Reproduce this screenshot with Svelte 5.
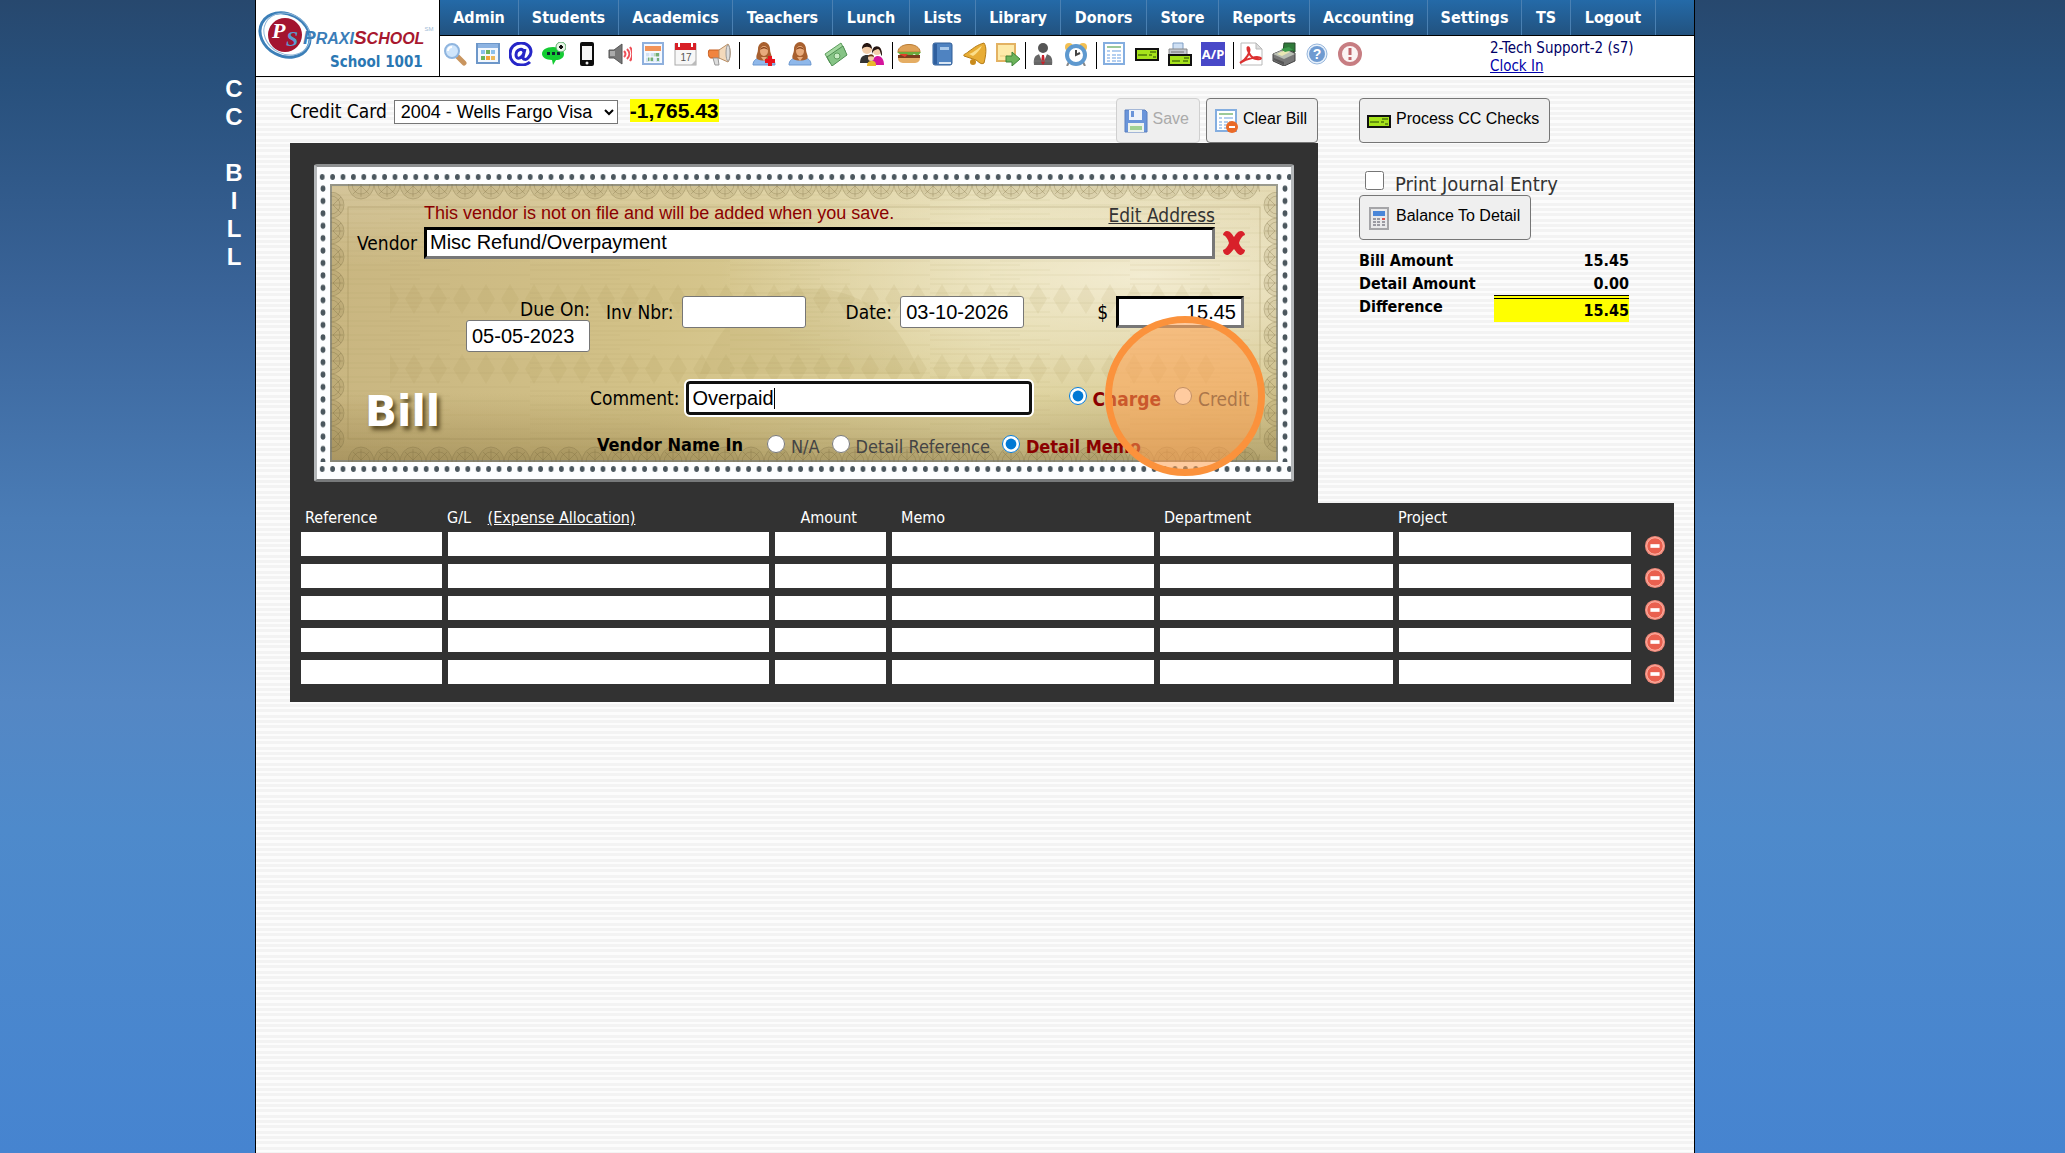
<script>
    const menu = [
        { label: "Admin", width: 79 },
        { label: "Students", width: 100 },
        { label: "Academics", width: 114 },
        { label: "Teachers", width: 100 },
        { label: "Lunch", width: 77 },
        { label: "Lists", width: 66 },
        { label: "Library", width: 85 },
        { label: "Donors", width: 86 },
        { label: "Store", width: 72 },
        { label: "Reports", width: 91 },
        { label: "Accounting", width: 118 },
        { label: "Settings", width: 94 },
        { label: "TS", width: 49 },
        { label: "Logout", width: 85 },
    ];

    const tools = [
        ["search", "schedule", "email", "chat", "phone", "speaker", "calendar", "date", "announce"],
        ["addPerson", "person", "money", "family"],
        ["burger", "book", "bell", "note"],
        ["staff", "clock"],
        ["ledger", "check", "printCheck", "payable"],
        ["pdf", "register", "help", "alert"],
    ];

    const person = `<path d="M1 23c0-5 4-7 7-7h8c4 0 7 2 7 7z" fill="#8fb8ea" stroke="#6b97cf"/>
        <path d="M5 17C3 14 6 12 6 7c0-4 3-7 6-7s6 3 6 7c0 5 3 7 1 10-4 2-10 2-14 0z" fill="#a8602f"/>
        <ellipse cx="12" cy="9" rx="4" ry="5" fill="#e8ab7c"/><path d="M8 8c1-4 7-4 8 0-3-2-5-2-8 0z" fill="#8a451c"/><path d="M9 15l3 4 3-4z" fill="#e8ab7c"/>`;

    const sheet = `<rect x="2" y="1" width="20" height="21" fill="#fff" stroke="#84aee0" stroke-width="2"/>
        <rect x="5" y="4" width="14" height="2" fill="#9cc99a"/>
        <path d="M5 8h3v2H5zM10 8h9v2h-9zM5 12h3v2H5zM10 12h4v2h-4zM15 12h4v2h-4zM5 15h3v2H5zM10 15h4v2h-4zM15 15h4v2h-4zM5 18h3v2H5zM10 18h4v2h-4zM15 18h4v2h-4z" fill="#b4cff0"/>`;

    const icons = {
        search: `<path d="M14 14l7 7" stroke="#c9955f" stroke-width="5" stroke-linecap="round"/><circle cx="9" cy="9" r="7" fill="#cfe5fb" stroke="#8fb5df" stroke-width="2"/><path d="M5 9c0-3 2-4 4-4" stroke="#fff" stroke-width="2" fill="none"/>`,
        schedule: `<rect x="1" y="2" width="22" height="19" fill="#f3f8fe" stroke="#6d97c9" stroke-width="2"/><rect x="2" y="2" width="20" height="4" fill="#8cb3e2"/><path d="M5 8h4v4H5zM15 8h4v4h-4z" fill="#8cc0ec"/><path d="M10 8h4v4h-4zM5 14h4v4H5z" fill="#6bb35c"/><path d="M10 14h4v4h-4z" fill="#f2a33a"/><path d="M15 14h4v4h-4z" fill="#ecb95c"/>`,
        email: `<path d="M16 7l-2 8c0 3 3 3 5 1 2-2 3-4 3-6 0-5-4-9-10-9C5 1 1 6 1 12s4 11 11 11c4 0 7-1 9-3M15 11c0-6-8-4-8 2 0 5 6 4 8-2z" fill="none" stroke="#2626c8" stroke-width="3"/>`,
        chat: `<path d="M11 5c7 0 11 3 11 7s-4 6-8 6l-3 5-1-5c-6 0-10-3-10-6 0-4 4-7 11-7z" fill="#14cc33"/><path d="M5 10h3v3H5zM10 10h3v3h-3zM15 10h3v3h-3z" fill="#123"/><circle cx="19" cy="5" r="5" fill="#e6f5e6" stroke="#5a6"/><path d="M17 5h4M19 3v4" stroke="#111" stroke-width="2"/>`,
        phone: `<rect x="5" y="0" width="14" height="24" rx="2" fill="#0d0d0d"/><rect x="7" y="4" width="10" height="14" fill="#f4f4f4"/><circle cx="12" cy="21" r="1.500" fill="#eee"/>`,
        speaker: `<path d="M1 8h5l8-6v20l-8-6H1z" fill="#777" stroke="#555"/><path d="M2 9h5v5H2z" fill="#aaa"/><path d="M16 9c2 2 2 4 0 6M19 7c3 3 3 7 0 10M22 5c3 4 3 10 0 14" fill="none" stroke="#ee4f57" stroke-width="2"/>`,
        calendar: `<rect x="2" y="1" width="20" height="21" fill="#f5f9ff" stroke="#8fb0dd" stroke-width="2"/><rect x="4" y="4" width="16" height="5" fill="#f29358"/><path d="M5 11h14v9H5z" fill="#d3e2f4"/><path d="M13 11h5v4h-5zM7 15h5v4H7zM16 16h2v3h-2z" fill="#74ae76"/><path d="M9 11v9M14 11v9M5 15h14" stroke="#fff"/>`,
        date: `<rect x="1" y="2" width="21" height="21" fill="#f7f7f7" stroke="#aaa"/><path d="M1 1h21v7H1z" fill="#d81f26"/><path d="M5 0v5M18 0v5" stroke="#fff" stroke-width="2"/><text x="12" y="19" text-anchor="middle" font-family="Liberation Sans, sans-serif" font-size="10" fill="#555">17</text><path d="M17 23l5-5v5z" fill="#bbb"/>`,
        announce: `<path d="M2 8h11v8H4c-3 0-3-6-2-8z" fill="#f0843f" stroke="#c65c1c"/><path d="M12 8l9-6c3 4 3 14 0 18l-9-4z" fill="#f3d9bb" stroke="#b78d63"/><ellipse cx="21" cy="11" rx="2" ry="8" fill="#ddd" stroke="#999"/><path d="M6 16h5l1 7H8z" fill="#ddd" stroke="#999"/>`,
        addPerson: person + `<path d="M18 14v10M13 19h10" stroke="#e8141c" stroke-width="4"/>`,
        person: person,
        money: `<path d="M1 12L17 1l4 8L6 21z" fill="#a4d7a0" stroke="#5d9d5d"/><path d="M3 15L19 4l4 9L8 24z" fill="#86c486" stroke="#4f8f52"/><circle cx="13" cy="14" r="3" fill="#c6e9c2" stroke="#5d9d5d"/>`,
        family: `<path d="M0 21c0-6 3-8 7-8s6 2 6 8z" fill="#333"/><circle cx="7" cy="7" r="5" fill="#f3cda9"/><path d="M2 7c0-8 10-8 10 0-3-3-7-3-10 0z" fill="#261611"/><path d="M12 23c0-7 3-9 6-9s6 3 6 9z" fill="#d5149c"/><circle cx="17" cy="9" r="4" fill="#f3cda9"/><path d="M12 12c-1-10 11-11 10 2-2-2-1-6-4-7-3 1-5 1-6 5z" fill="#261611"/><path d="M7 24c0-4 2-5 5-5s4 1 4 5z" fill="#e8b92d"/><circle cx="11" cy="16" r="3" fill="#f3cda9"/><path d="M8 15c1-4 6-3 6 0-2-1-4-1-6 0z" fill="#6d3a14"/>`,
        burger: `<path d="M1 10c0-10 22-10 22 0z" fill="#dfa257" stroke="#b97c34"/><path d="M0 10h24l-3 4-4-2-4 3-4-3-4 2z" fill="#6cab3c"/><path d="M1 13h22v3H1z" fill="#7b3e1e"/><path d="M2 12l6 3 3-3z" fill="#e23d2c"/><path d="M1 16h22c0 4-3 5-6 5H7c-3 0-6-1-6-5z" fill="#e5ad63"/>`,
        book: `<rect x="3" y="1" width="19" height="22" rx="2" fill="#4f83c1" stroke="#2f5c96"/><path d="M4 2h3v20H4z" fill="#2f5f9e"/><path d="M9 20h12v2H9z" fill="#d9e6f4"/><rect x="10" y="5" width="9" height="3" fill="#a9c9ea"/>`,
        bell: `<path d="M21 1c3 4 2 12 0 20-3 2-5-1-8-3L1 14c-1-2 2-2 4-4C12 5 14 3 21 1z" fill="#e8ad35" stroke="#b47b15"/><path d="M6 12c6-2 9-6 13-8-2 4-6 8-9 10z" fill="#fbdf8b"/><circle cx="10" cy="20" r="3" fill="#c98b1c"/>`,
        note: `<path d="M1 2h18v17H1z" fill="#fdeaa9" stroke="#e3b262" stroke-width="2"/><path d="M4 14h8" stroke="#e9ca80"/><path d="M10 14h6v-4l8 7-8 7v-4h-6z" fill="#6cb35a" stroke="#3c8237"/>`,
        staff: `<path d="M3 23c-1-7 1-10 6-11h6c5 1 7 4 6 11z" fill="#666"/><circle cx="12" cy="6" r="5" fill="#555"/><path d="M8 12l4 10 4-10z" fill="#fff"/><path d="M11 13h2l1 7-2 3-2-3z" fill="#c8202a"/><path d="M3 19h18" stroke="#777"/>`,
        clock: `<circle cx="5" cy="5" r="4" fill="#f2bf52"/><circle cx="19" cy="5" r="4" fill="#f2bf52"/><path d="M5 20l-2 4M19 20l2 4" stroke="#888" stroke-width="2"/><circle cx="12" cy="13" r="9" fill="#fff" stroke="#5e99cf" stroke-width="4"/><path d="M12 8v5l4-2" fill="none" stroke="#444" stroke-width="2"/>`,
        ledger: sheet,
        check: `<rect x="1" y="7" width="22" height="11" fill="#a6e31b" stroke="#111" stroke-width="2"/><path d="M3 13h9M15 10h6M14 13h3M18 15h3" stroke="#234400" stroke-width="1"/>`,
        printCheck: `<path d="M5 1h10v8H5z" fill="#cfe0f4" stroke="#7e9ec4"/><path d="M1 7h18v8H1z" fill="#c3c8cf" stroke="#888"/><path d="M3 10h13" stroke="#777"/><rect x="1" y="13" width="22" height="10" fill="#a6e31b" stroke="#111" stroke-width="2"/><path d="M4 19h8M16 16h5M15 19h5" stroke="#234400"/>`,
        payable: `<rect width="24" height="24" fill="#4848c8"/><text x="12" y="17" text-anchor="middle" font-family="Noto Sans, sans-serif" font-size="13" font-weight="bold" fill="#fff">A/P</text>`,
        pdf: `<path d="M2 1h15l6 6v16H2z" fill="#fff" stroke="#b9b9b9"/><path d="M17 1v6h6z" fill="#ddd" stroke="#b9b9b9"/><path d="M1 21c6-3 11-11 9-15-1-2-3 0 0 5 2 4 6 7 11 6 3-1-2-3-8-1-5 1-9 3-12 5z" fill="none" stroke="#dc3030" stroke-width="2"/>`,
        register: `<path d="M1 12l12-5 10 4v8l-11 5-11-5z" fill="#777" stroke="#444"/><path d="M1 12l11 5 11-5-10-5z" fill="#b9beb4"/><path d="M12 1h11v9l-6-2-6 2z" fill="#2f7a3a" stroke="#294b2c"/><path d="M5 12l8-4 5 2-8 4z" fill="#e8e6b4"/><path d="M9 7l8-2 4 3-8 2z" fill="#3c9a4b"/><path d="M2 16l10 4v3L2 18z" fill="#555"/>`,
        help: `<circle cx="12" cy="12" r="10" fill="#e8f1fb" stroke="#96b6dc"/><circle cx="12" cy="12" r="8" fill="#6f9bd1"/><text x="12" y="17" text-anchor="middle" font-family="Liberation Sans, sans-serif" font-size="14" font-weight="bold" fill="#fff">?</text>`,
        alert: `<circle cx="12" cy="12" r="10" fill="#fbf3f3" stroke="#c77d82" stroke-width="4"/><path d="M12 6v7M12 15v3" stroke="#c0666c" stroke-width="3"/>`,
        save: `<path d="M1 1h20l2 2v20H1z" fill="#4a7fd6" stroke="#3564b5"/><path d="M5 1h13v10H5z" fill="#eef4fd"/><path d="M7 2h3v6H7z" fill="#4a7fd6"/><path d="M4 14h16v9H4z" fill="#eef4ee"/><path d="M6 17h12v4H6z" fill="#8dca7d"/>`,
        clear: sheet + `<circle cx="18" cy="18" r="6" fill="#ea6a28"/><path d="M15 18h6" stroke="#fff" stroke-width="2"/>`,
        calculator: `<rect x="3" y="2" width="18" height="21" fill="#e9e9ea" stroke="#a5a5a8" stroke-width="2"/><rect x="6" y="5" width="12" height="5" fill="#4a86d8"/><path d="M6 12h3v2H6zM10 12h3v2h-3zM6 15h3v2H6zM10 15h3v2h-3zM6 18h3v2H6zM10 18h3v2h-3zM15 15h3v2h-3zM15 18h3v2h-3z" fill="#9a9aa2"/><path d="M15 12h3v2h-3z" fill="#e0524c"/>`,
        remove: `<path d="M5 0c3 0 5 3 7 6 2-3 4-6 7-6 2 0 4 2 4 4-3 1-5 4-6 8 1 3 3 6 6 7 0 3-3 5-5 5-3-1-4-4-6-6-2 2-4 5-6 6-3 0-5-2-5-5 3-1 5-4 6-7-1-4-3-7-6-8 0-2 2-4 4-4z" fill="#d8202a"/>`,
        minus: `<circle cx="12" cy="12" r="11" fill="#f08a7b"/><circle cx="12" cy="12" r="9" fill="#e9604f" stroke="#ffb9ac"/><path d="M7 12h10" stroke="#fff" stroke-width="4"/>`,
    };

    const columns = ["reference", "G/L account", "amount", "memo", "department", "project"];

    let card = $state("2004 - Wells Fargo Visa");
    let vendor = $state("Misc Refund/Overpayment");
    let dueOn = $state("05-05-2023");
    let invoice = $state("");
    let date = $state("03-10-2026");
    let amount = $state("15.45");
    let comment = $state("Overpaid");
    let kind = $state("charge");
    let nameIn = $state("memo");
    let rows = $state([1, 2, 3, 4, 5]);
</script>

{#snippet icon(name)}
    <svg class="icon" viewBox="0 0 24 24" aria-hidden="true">{@html icons[name]}</svg>
{/snippet}

<div class="screen">
    <aside>
        <h1><span>C</span><span>C</span><span></span><span>B</span><span>I</span><span>L</span><span>L</span></h1>
    </aside>

    <div class="page">
        <header>
            <a class="brand" href="#home">
                <svg class="swoosh" viewBox="0 0 50 56" aria-hidden="true">
                    <ellipse cx="25" cy="27" rx="26" ry="21" transform="rotate(28 25 27)" fill="none" stroke="#3c7fb8" stroke-width="3" />
                    <ellipse cx="27" cy="26" rx="24" ry="20" transform="rotate(28 27 26)" fill="none" stroke="#8fb6d8" stroke-width="1" />
                    <circle cx="25" cy="27" r="17" fill="#a3142f" />
                    <text x="12" y="30" font-family="Liberation Serif, serif" font-size="22" font-weight="bold" font-style="italic" fill="#fff">P</text>
                    <text x="26" y="38" font-family="Liberation Serif, serif" font-size="22" font-weight="bold" font-style="italic" fill="#5b9bd0">S</text>
                </svg>
                <span class="names">
                    <span class="wordmark"><b>P</b>RAXI<i><b>S</b>CHOOL</i><small>SM</small></span>
                    <span class="school">School 1001</span>
                </span>
            </a>
            <div class="bars">
                <nav>
                    {#each menu as item}
                        <a href="#{item.label}" style="width: {item.width}px">{item.label}</a>
                    {/each}
                </nav>
                <div class="toolbar">
                    {#each tools as group}
                        <div class="group">
                            {#each group as tool}
                                <a href="#{tool}" aria-label={tool}>{@render icon(tool)}</a>
                            {/each}
                        </div>
                    {/each}
                    <div class="user">
                        <div>2-Tech Support-2 (s7)</div>
                        <a href="#clock-in">Clock In</a>
                    </div>
                </div>
            </div>
        </header>

        <main>
            <div class="top">
                <section class="bill">
                    <div class="account">
                        <label for="card">Credit Card</label>
                        <select id="card" bind:value={card}>
                            <option>2004 - Wells Fargo Visa</option>
                        </select>
                        <strong class="balance">-1,765.43</strong>
                        <div class="actions">
                            <button disabled>{@render icon("save")}Save</button>
                            <button>{@render icon("clear")}Clear Bill</button>
                        </div>
                    </div>

                    <div class="panel">
                        <div class="cheque">
                            <svg class="paper" aria-hidden="true">
                                <defs>
                                    <linearGradient id="gold" x1="0" y1="0" x2="1" y2="0">
                                        <stop offset="0" stop-color="#c9b681" />
                                        <stop offset=".35" stop-color="#d3c288" />
                                        <stop offset=".7" stop-color="#e0d5a2" />
                                        <stop offset="1" stop-color="#d8ca94" />
                                    </linearGradient>
                                    <radialGradient id="glow" cx=".86" cy=".33" r=".45">
                                        <stop offset="0" stop-color="#fffbee" stop-opacity=".65" />
                                        <stop offset="1" stop-color="#fffbee" stop-opacity="0" />
                                    </radialGradient>
                                    <linearGradient id="shade" x1="0" y1="0" x2="0" y2="1">
                                        <stop offset="0" stop-color="#fff" stop-opacity=".2" />
                                        <stop offset=".3" stop-color="#fff" stop-opacity="0" />
                                        <stop offset=".75" stop-color="#7a6226" stop-opacity="0" />
                                        <stop offset="1" stop-color="#6e5824" stop-opacity=".35" />
                                    </linearGradient>
                                    <pattern id="dotsX" width="10.400" height="12" patternUnits="userSpaceOnUse" x="3" y="7">
                                        <ellipse cx="5.200" cy="6" rx="2.400" ry="3" fill="#4b575e" />
                                    </pattern>
                                    <pattern id="dotsY" width="12" height="12.400" patternUnits="userSpaceOnUse" x="3" y="6">
                                        <ellipse cx="6" cy="6.200" rx="2.400" ry="3" fill="#4b575e" />
                                    </pattern>
                                    <pattern id="dotsRight" width="12" height="12.400" patternUnits="userSpaceOnUse" x="0" y="6">
                                        <ellipse cx="6" cy="6.200" rx="2.400" ry="3" fill="#4b575e" />
                                    </pattern>
                                    <pattern id="fan" width="26" height="18" patternUnits="userSpaceOnUse" x="8" y="20">
                                        <path d="M0 0a13 15 0 0 0 26 0M4 0a9 10 0 0 0 18 0M13 0v13M13 2l-8 8M13 2l8 8" fill="none" stroke="#6d5f35" stroke-opacity=".28" />
                                        <path d="M0 0a13 15 0 0 0 26 0z" fill="#7a6a3a" fill-opacity=".13" />
                                    </pattern>
                                    <pattern id="fanSide" width="14" height="26" patternUnits="userSpaceOnUse">
                                        <path d="M0 0a13 13 0 0 1 0 26M0 4a9 9 0 0 1 0 18M0 13h12M2 13l8-8M2 13l8 8" fill="none" stroke="#6d5f35" stroke-opacity=".28" />
                                        <path d="M0 0a13 13 0 0 1 0 26z" fill="#7a6a3a" fill-opacity=".13" />
                                    </pattern>
                                    <pattern id="diamonds" width="24" height="70" patternUnits="userSpaceOnUse">
                                        <path d="M12 30l9 15-9 15-9-15z" fill="#a08a48" fill-opacity=".1" />
                                    </pattern>
                                    <pattern id="grain" width="200" height="14" patternUnits="userSpaceOnUse">
                                        <path d="M0 2h120M60 7h140M0 11h90" stroke="#a08a4a" stroke-opacity=".12" />
                                    </pattern>
                                </defs>
                                <svg x="16" y="20" width="948" height="278">
                                    <rect width="100%" height="100%" fill="url(#gold)" />
                                    <rect width="100%" height="100%" fill="url(#glow)" />
                                    <rect width="100%" height="100%" fill="url(#shade)" />
                                    <rect width="100%" height="100%" fill="url(#grain)" />
                                    <rect x="60" y="90" width="830" height="120" fill="url(#diamonds)" />
                                    <path d="M370 190c20-50 50-85 110-85s90 35 110 85" fill="#a08a48" fill-opacity=".1" />
                                    <rect x="18" y="23" width="912" height="232" fill="none" stroke="#8f7f4a" stroke-opacity=".35" />
                                    <rect width="948" height="278" fill="none" stroke="#7b8080" stroke-opacity=".7" stroke-width="4" />
                                </svg>
                                <rect x="34" y="20" width="912" height="18" fill="url(#fan)" />
                                <g transform="translate(0 318) scale(1 -1)"><rect x="34" y="20" width="912" height="18" fill="url(#fan)" /></g>
                                <g transform="translate(17 28)"><rect width="14" height="260" fill="url(#fanSide)" /></g>
                                <g transform="translate(963 28) scale(-1 1)"><rect width="14" height="260" fill="url(#fanSide)" /></g>
                                <rect x="3" y="7" width="974" height="12" fill="url(#dotsX)" />
                                <g transform="translate(0 292)"><rect x="3" y="7" width="974" height="12" fill="url(#dotsX)" /></g>
                                <rect x="3" y="18" width="12" height="280" fill="url(#dotsY)" />
                                <g transform="translate(965 0)"><rect y="18" width="12" height="280" fill="url(#dotsRight)" /></g>
                            </svg>

                            <div class="form">
                                <div class="vendor">
                                    <div class="notes">
                                        <span class="warning">This vendor is not on file and will be added when you save.</span>
                                        <a href="#address">Edit Address</a>
                                    </div>
                                    <label for="vendor">Vendor</label>
                                    <input id="vendor" class="inset" bind:value={vendor} />
                                    <button class="plain" aria-label="Clear vendor" onclick={() => (vendor = "")}>{@render icon("remove")}</button>
                                </div>

                                <div class="dates">
                                    <div class="due">
                                        <label for="due">Due On:</label>
                                        <input id="due" bind:value={dueOn} />
                                    </div>
                                    <div class="field">
                                        <label for="invoice">Inv Nbr:</label>
                                        <input id="invoice" bind:value={invoice} />
                                    </div>
                                    <div class="field date">
                                        <label for="date">Date:</label>
                                        <input id="date" bind:value={date} />
                                    </div>
                                    <div class="field amount">
                                        <label for="amount">$</label>
                                        <input id="amount" class="inset" bind:value={amount} />
                                    </div>
                                </div>

                                <div class="lower">
                                    <div class="stamp">Bill</div>
                                    <div class="details">
                                        <div class="comment">
                                            <label for="comment">Comment:</label>
                                            <div class="entry">
                                                <input id="comment" bind:value={comment} />
                                                <span class="caret"></span>
                                            </div>
                                            <label class="option"><input type="radio" value="charge" bind:group={kind} /><span>Charge</span></label>
                                            <label class="option"><input type="radio" value="credit" bind:group={kind} /><span>Credit</span></label>
                                        </div>
                                        <div class="name-in">
                                            <strong>Vendor Name In</strong>
                                            <label class="option"><input type="radio" value="none" bind:group={nameIn} /><span>N/A</span></label>
                                            <label class="option"><input type="radio" value="reference" bind:group={nameIn} /><span>Detail Reference</span></label>
                                            <label class="option"><input type="radio" value="memo" bind:group={nameIn} /><span>Detail Memo</span></label>
                                        </div>
                                    </div>
                                </div>
                            </div>
                            <div class="pointer"></div>
                        </div>
                    </div>
                </section>

                <section class="side">
                    <button>{@render icon("check")}Process CC Checks</button>
                    <label class="journal"><input type="checkbox" /><span>Print Journal Entry</span></label>
                    <button>{@render icon("calculator")}Balance To Detail</button>
                    <dl>
                        <dt>Bill Amount</dt>
                        <dd>15.45</dd>
                        <dt>Detail Amount</dt>
                        <dd>0.00</dd>
                        <dt>Difference</dt>
                        <dd class="difference">15.45</dd>
                    </dl>
                </section>
            </div>

            <div class="lines">
                <table>
                    <thead>
                        <tr>
                            <th class="reference">Reference</th>
                            <th class="gl">G/L <a href="#allocation">(Expense Allocation)</a></th>
                            <th class="sum">Amount</th>
                            <th class="memo">Memo</th>
                            <th class="department">Department</th>
                            <th class="project">Project</th>
                            <th class="delete"></th>
                        </tr>
                    </thead>
                    <tbody>
                        {#each rows as row (row)}
                            <tr>
                                {#each columns as column}
                                    <td><input aria-label="Line {row} {column}" /></td>
                                {/each}
                                <td class="delete">
                                    <button class="plain" aria-label="Remove line {row}" onclick={() => (rows = rows.filter((r) => r !== row))}>{@render icon("minus")}</button>
                                </td>
                            </tr>
                        {/each}
                    </tbody>
                </table>
            </div>
        </main>
    </div>
</div>

<style>
    :global(body) {
        margin: 0;
    }

    .screen {
        display: grid;
        grid-template-columns: 255px minmax(0, 1440px) auto;
        min-height: 100vh;
        background: linear-gradient(#27486e, #28507c 7%, #3a6499 26%, #4a7cb6 45%, #5487c4 61%, #4e8acb 72%, #4684d0);
        font-family: "DejaVu Sans Condensed", "Noto Sans", sans-serif;
        font-size: 19px;
        color: #000;
    }

    .screen * {
        box-sizing: border-box;
    }

    .icon {
        display: block;
        width: 24px;
        height: 24px;
    }

    aside {
        display: flex;
        justify-content: flex-end;
        padding: 75px 12px 0 0;
    }

    h1 {
        display: flex;
        flex-direction: column;
        width: 18px;
        margin: 0;
        font: bold 24px/28px "Liberation Sans", sans-serif;
        color: #fff;
        text-align: center;
    }

    h1 span {
        height: 28px;
    }

    .page {
        border: solid #000;
        border-width: 0 1px;
        background: linear-gradient(#f3f3f3 0 3px, #fcfcfc 3px 5px, #f3f3f3 5px 8px, #fcfcfc 8px 11px, #f3f3f3 11px 14px, #fcfcfc 14px) 0 0 / 100% 16px;
    }

    header {
        display: flex;
        height: 77px;
        border-bottom: 1px solid #000;
        background: #fff;
    }

    .brand {
        display: flex;
        width: 184px;
        padding: 8px 0 0 4px;
        border-right: 1px solid #000;
        text-decoration: none;
    }

    .swoosh {
        flex: none;
        width: 50px;
        height: 56px;
        overflow: visible;
    }

    .names {
        display: flex;
        flex-direction: column;
        margin-left: -7px;
        padding-top: 18px;
    }

    .wordmark {
        height: 27px;
        font: italic bold 16px/24px "Liberation Sans", sans-serif;
        color: #3a7db8;
        white-space: nowrap;
    }

    .wordmark b {
        font-size: 19px;
    }

    .wordmark i {
        color: #a8182f;
    }

    .wordmark small {
        font: 6px "Liberation Sans", sans-serif;
        vertical-align: top;
        color: #9dbbd6;
    }

    .school {
        padding-left: 27px;
        font-size: 15px;
        line-height: 18px;
        font-weight: bold;
        color: #2a77b3;
    }

    .bars {
        flex: 1;
        min-width: 0;
    }

    nav {
        display: flex;
        height: 36px;
        border-bottom: 1px solid #000;
        background: linear-gradient(#246aa8, #22527f);
    }

    nav a {
        border-right: 1px solid #4a80b2;
        font-size: 16px;
        line-height: 35px;
        font-weight: bold;
        color: #fff;
        text-align: center;
        text-decoration: none;
    }

    .toolbar {
        display: flex;
        height: 40px;
        padding: 6px 0 0 3px;
    }

    .group {
        display: flex;
        gap: 9px;
        height: 27px;
        padding-right: 8px;
    }

    .group + .group {
        padding-left: 5px;
        border-left: 1px solid #000;
    }

    .group:nth-child(2) {
        gap: 12px;
        padding-left: 12px;
    }

    .group:nth-child(3) {
        padding-left: 4px;
        padding-right: 5px;
    }

    .user {
        margin-left: auto;
        width: 204px;
        font-size: 15px;
        line-height: 18px;
        margin-top: -3px;
        color: #006;
    }

    .user a {
        color: #00a;
    }

    main {
        padding: 21px 20px 0 34px;
    }

    .top {
        display: flex;
        align-items: flex-start;
        gap: 41px;
    }

    .bill {
        flex: 0 1 1028px;
        min-width: 0;
    }

    .account {
        display: flex;
        height: 45px;
    }

    .account label {
        line-height: 26px;
    }

    select {
        width: 224px;
        height: 24px;
        margin: 2px 12px 0 7px;
        padding: 0 0 0 2px;
        border: 1px solid #767676;
        background: #fff;
        font: 18px "Liberation Sans", sans-serif;
        color: #000;
    }

    .balance {
        align-self: flex-start;
        margin-top: 1px;
        background: #ff0;
        font: bold 21px/23px "Liberation Sans", sans-serif;
    }

    .actions {
        display: flex;
        gap: 6px;
        margin-left: auto;
    }

    button {
        display: flex;
        align-items: center;
        gap: 5px;
        height: 45px;
        padding: 0 10px 3px 7px;
        border: 1px solid #767676;
        border-radius: 4px;
        background: #efefef;
        font: 16px "Liberation Sans", sans-serif;
        color: #000;
        white-space: nowrap;
    }

    button .icon {
        margin-top: 3px;
    }

    button:disabled {
        border-color: #d0d0d0;
        color: #aaa;
    }

    button:disabled .icon {
        opacity: .8;
    }

    button.plain {
        height: 24px;
        padding: 0;
        border: 0;
        background: none;
    }

    button.plain .icon {
        margin: 0;
    }

    .panel {
        padding: 21px 24px;
        background: #323232;
    }

    .cheque {
        position: relative;
        min-height: 318px;
        border: 3px solid #a2a6a8;
        border-color: #8d8f90 #b5b8ba #77797a #b5b8ba;
        border-radius: 3px;
        background: #fdfeff;
    }

    .paper {
        position: absolute;
        top: -3px;
        left: -3px;
        width: 980px;
        height: 318px;
    }

    .form {
        position: relative;
        padding: 35px 45px 0 40px;
    }

    .vendor {
        display: grid;
        grid-template-columns: 60px 1fr 24px;
        column-gap: 7px;
        align-items: center;
    }

    .notes {
        grid-column: 2;
        display: flex;
        justify-content: space-between;
        height: 25px;
    }

    .vendor .notes a {
        color: #333;
        line-height: 27px;
    }

    .warning {
        color: #8b0000;
        font: 18px/22px "Liberation Sans", sans-serif;
    }

    .vendor > label {
        grid-column: 1;
        justify-self: end;
    }

    input {
        border: 1px solid #767676;
        border-radius: 3px;
        background: #fff;
        font: 20px "Liberation Sans", sans-serif;
        color: #000;
    }

    .form input:not([type="radio"]) {
        width: 124px;
        height: 32px;
        padding: 0 5px;
    }

    .form input.inset {
        width: 100%;
        padding: 0 3px 2px;
        border: 3px inset #222;
        border-color: #222 #777 #777 #222;
        border-radius: 0;
    }

    .dates {
        display: flex;
        margin: 37px 2px 0 109px;
    }

    .due {
        width: 124px;
        margin-right: 16px;
        text-align: right;
    }

    .due label {
        display: block;
        height: 24px;
        line-height: 26px;
    }

    .field {
        display: flex;
        align-items: center;
        gap: 8px;
        height: 32px;
    }

    .date {
        margin-left: 40px;
    }

    .amount {
        margin-left: auto;
    }

    .form .amount input.inset {
        width: 128px;
        padding: 0 5px 0 3px;
        text-align: right;
    }

    .lower {
        display: flex;
        margin-top: 29px;
    }

    .stamp {
        flex: none;
        width: 223px;
        padding: 8px 0 0 8px;
        font: bold 42px/46px "DejaVu Sans", sans-serif;
        color: #fff;
        text-shadow: 3px 4px 4px #5c4d25;
    }

    .details {
        min-width: 0;
    }

    .comment,
    .name-in {
        display: flex;
        align-items: center;
        white-space: nowrap;
    }

    .comment {
        padding-left: 10px;
    }

    .comment .option {
        flex: none;
    }

    .entry {
        position: relative;
        flex: none;
        margin: 0 37px 0 6px;
    }

    .form .entry input {
        width: 346px;
        height: 34px;
        padding: 0 4px;
        border: 3px solid #101010;
        border-radius: 4px;
        outline: 2px solid #fff;
    }

    .caret {
        position: absolute;
        top: 7px;
        left: 88px;
        width: 1px;
        height: 21px;
        background: #000;
    }

    .option {
        display: flex;
        align-items: flex-start;
        gap: 6px;
        height: 24px;
        color: #444;
    }

    .option span {
        line-height: 26px;
    }

    .option input {
        flex: none;
        width: 18px;
        height: 18px;
        margin: 1px 0 0;
        accent-color: #0078d4;
    }

    .option:has(:checked) {
        font-weight: bold;
        color: #8b0000;
    }

    .comment .option + .option {
        margin-left: 13px;
    }

    .name-in {
        gap: 12px;
        margin: 19px 0 0 17px;
        font-size: 18px;
    }

    .name-in strong {
        align-self: flex-start;
        margin-right: 12px;
    }

    .pointer {
        position: absolute;
        top: 149px;
        left: 788px;
        width: 160px;
        height: 160px;
        border: 7px solid #fb923c;
        border-radius: 50%;
        background: rgba(255, 160, 80, .55);
        pointer-events: none;
    }

    .side {
        display: flex;
        flex-direction: column;
        align-items: flex-start;
        width: 270px;
    }

    .journal {
        display: flex;
        gap: 11px;
        height: 24px;
        margin: 28px 0 0 6px;
        font-size: 20px;
        color: #333;
    }

    .journal span {
        line-height: 26px;
    }

    .journal input {
        width: 19px;
        height: 19px;
        margin: 0;
    }

    dl {
        display: grid;
        grid-template-columns: 1fr 135px;
        width: 100%;
        margin: 9px 0 0;
        font-size: 16px;
        font-weight: bold;
        line-height: 23px;
    }

    dd {
        margin: 0;
        text-align: right;
    }

    .difference {
        height: 27px;
        border-top: 4px double #000;
        background: #ff0;
    }

    .lines {
        padding: 5px 8px 14px;
        background: #323232;
    }

    table {
        width: 100%;
        table-layout: fixed;
        border-collapse: collapse;
    }

    th {
        height: 20px;
        padding: 0 0 0 7px;
        font-size: 16px;
        line-height: 20px;
        font-weight: normal;
        color: #fff;
        text-align: left;
        white-space: nowrap;
    }

    th.gl,
    th.project {
        padding-left: 2px;
    }

    th.memo {
        padding-left: 12px;
    }

    th a {
        margin-left: 12px;
        color: #fff;
    }

    .reference {
        width: 147px;
    }

    .gl {
        width: 327px;
    }

    .sum {
        width: 117px;
    }

    th.sum {
        padding: 0 32px 0 0;
        text-align: right;
    }

    .memo {
        width: 268px;
    }

    .department {
        width: 239px;
    }

    .delete {
        width: 22px;
    }

    td {
        height: 32px;
        padding: 0 3px;
    }

    td input {
        display: block;
        width: 100%;
        height: 24px;
        padding: 0 4px;
        border: 0;
        border-radius: 0;
    }

    td:nth-child(6) {
        padding-right: 13px;
    }

    th.delete {
        padding: 0;
    }

    td.delete {
        padding: 3px 0 0;
    }

    td .icon {
        width: 22px;
        height: 22px;
    }
</style>
